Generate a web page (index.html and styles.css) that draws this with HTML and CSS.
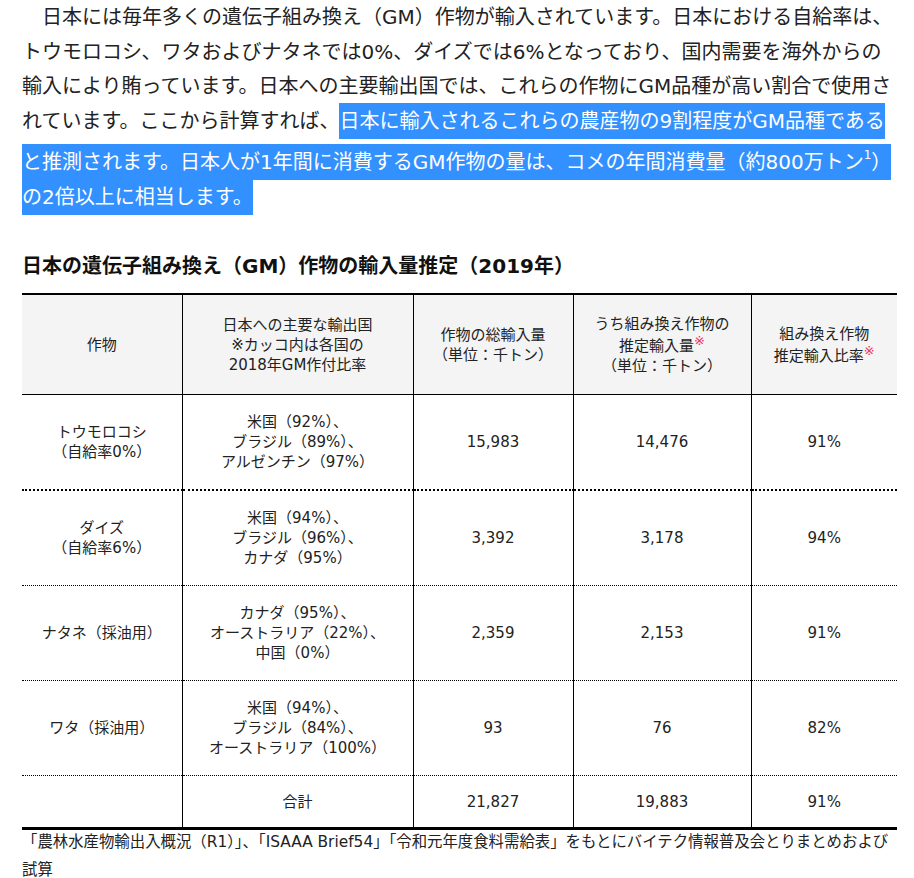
FILE: index.html
```html
<!DOCTYPE html>
<html lang="ja">
<head>
<meta charset="utf-8">
<title>遺伝子組み換え作物の輸入量</title>
<link rel="stylesheet" href="styles.css">
</head>
<body>
<main class="page">
  <p class="lead">日本には毎年多くの遺伝子組み換え（GM）作物が輸入されています。日本における自給率は、トウモロコシ、ワタおよびナタネでは0%、ダイズでは6%となっており、国内需要を海外からの輸入により賄っています。日本への主要輸出国では、これらの作物にGM品種が高い割合で使用されています。ここから計算すれば、<span class="hl">日本に輸入されるこれらの農産物の9割程度がGM品種であると推測されます。日本人が1年間に消費するGM作物の量は、コメの年間消費量（約800万トン<sup class="fn">1</sup>）の2倍以上に相当します。</span></p>

  <h2 class="title">日本の遺伝子組み換え（GM）作物の輸入量推定（2019年）</h2>

  <table class="data">
    <colgroup>
      <col class="c1"><col class="c2"><col class="c3"><col class="c4"><col class="c5">
    </colgroup>
    <thead>
      <tr>
        <th>作物</th>
        <th>日本への主要な輸出国<br>※カッコ内は各国の<br>2018年GM作付比率</th>
        <th>作物の総輸入量<br>（単位：千トン）</th>
        <th>うち組み換え作物の<br>推定輸入量<sup class="mark">※</sup><br>（単位：千トン）</th>
        <th>組み換え作物<br>推定輸入比率<sup class="mark">※</sup></th>
      </tr>
    </thead>
    <tbody>
      <tr class="r-first">
        <td>トウモロコシ<br>（自給率0%）</td>
        <td>米国（92%）、<br>ブラジル（89%）、<br>アルゼンチン（97%）</td>
        <td>15,983</td>
        <td>14,476</td>
        <td>91%</td>
      </tr>
      <tr>
        <td>ダイズ<br>（自給率6%）</td>
        <td>米国（94%）、<br>ブラジル（96%）、<br>カナダ（95%）</td>
        <td>3,392</td>
        <td>3,178</td>
        <td>94%</td>
      </tr>
      <tr>
        <td>ナタネ（採油用）</td>
        <td>カナダ（95%）、<br>オーストラリア（22%）、<br>中国（0%）</td>
        <td>2,359</td>
        <td>2,153</td>
        <td>91%</td>
      </tr>
      <tr>
        <td>ワタ（採油用）</td>
        <td>米国（94%）、<br>ブラジル（84%）、<br>オーストラリア（100%）</td>
        <td>93</td>
        <td>76</td>
        <td>82%</td>
      </tr>
      <tr class="r-total">
        <td></td>
        <td>合計</td>
        <td>21,827</td>
        <td>19,883</td>
        <td>91%</td>
      </tr>
    </tbody>
  </table>
  <p class="source">「農林水産物輸出入概況（R1）」、「ISAAA Brief54」「令和元年度食料需給表」をもとにバイテク情報普及会とりまとめおよび試算</p>
</main>
</body>
</html>
```
FILE: styles.css
```css
html, body {
  margin: 0;
  padding: 0;
  background: #fff;
}
body {
  font-family: "DejaVu Sans", "Noto Sans CJK JP", sans-serif;
  color: #222;
}
.page {
  width: 875px;
  margin-left: 22px;
}
.lead {
  margin: 0;
  font-size: 20px;
  line-height: 34.5px;
  text-indent: 1em;
}
.hl {
  background: #3390ff;
  color: #fff;
  padding: 6px 0;
}
.fn {
  font-size: 12px;
  line-height: 34px;
  vertical-align: 10px;
}
.title {
  margin: 37px 0 12px;
  font-size: 20px;
  line-height: 30px;
  font-weight: bold;
  color: #111;
}
.data {
  width: 875px;
  table-layout: fixed;
  border-collapse: collapse;
  border-top: 2px solid #000;
  border-bottom: 3px solid #000;
  font-size: 15px;
  line-height: 20px;
  color: #222;
}
.c1 { width: 160px; }
.c2 { width: 231px; }
.c3 { width: 160px; }
.c4 { width: 178px; }
.c5 { width: 146px; }
.data th,
.data td {
  padding: 0 4px;
  text-align: center;
  vertical-align: middle;
  border-left: 1px solid #000;
}
.data th:first-child,
.data td:first-child {
  border-left: none;
}
.data th {
  background: #f4f4f4;
  font-weight: normal;
  height: 99px;
  border-bottom: 1px solid #000;
}
.data td {
  height: 94px;
  border-bottom: 1px dotted #000;
}
.data .r-first td {
  border-bottom: 2px dotted #000;
}
.data .r-total td {
  height: 51px;
  border-bottom: none;
}
.mark {
  color: #f0306a;
  font-size: 13px;
  line-height: 1;
  vertical-align: 6px;
}
.source {
  margin: -2px 0 0;
  font-size: 15.4px;
  line-height: 28px;
}
```
